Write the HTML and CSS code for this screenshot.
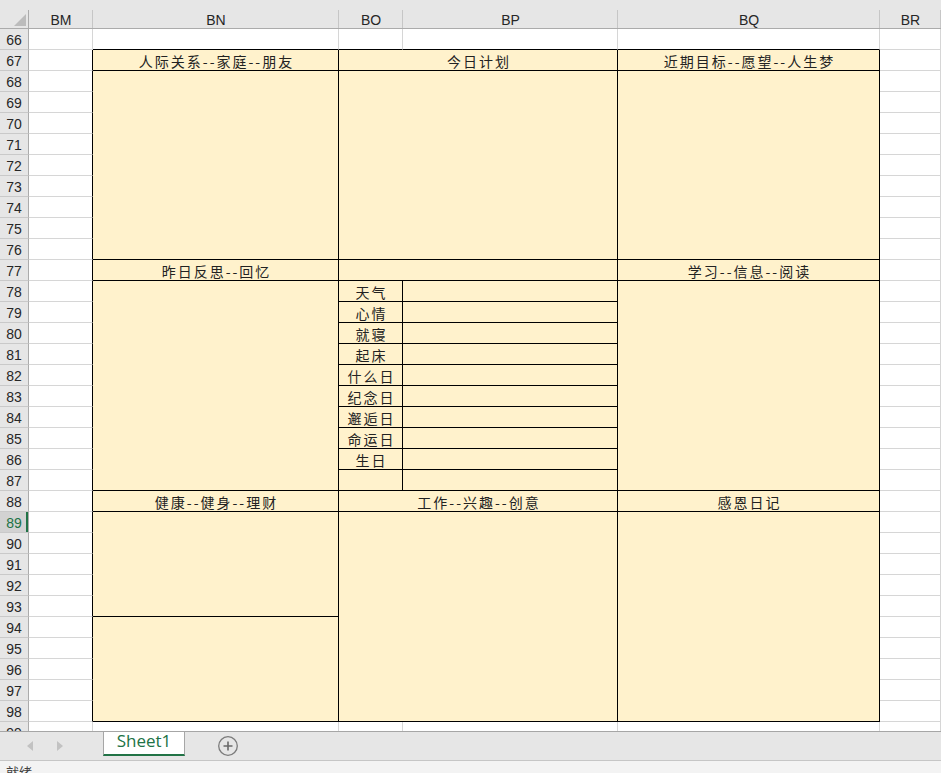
FILE: index.html
```html
<!DOCTYPE html>
<html lang="zh-CN">
<head>
<meta charset="utf-8">
<title>Sheet1</title>
<link rel="stylesheet" href="styles.css">
</head>
<body>
<div class="app">
  <div class="sheet">
    <div class="corner"><svg class="corner-mark" width="28" height="28" viewBox="0 0 28 28"><polygon points="26,14 26,26 14,26" fill="#bcbcbc"/></svg></div>
    <div class="ch">BM</div><div class="ch">BN</div><div class="ch">BO</div><div class="ch">BP</div><div class="ch">BQ</div><div class="ch">BR</div>

    <div class="rh">66</div><div class="c"></div><div class="c bb"></div><div class="c bb"></div><div class="c bb"></div><div class="c bb"></div><div class="c"></div>

    <div class="rh">67</div><div class="c br"></div><div class="x t">人际关系--家庭--朋友</div><div class="x t cs2">今日计划</div><div class="x t">近期目标--愿望--人生梦</div><div class="c"></div>

    <div class="rh">68</div><div class="c br"></div><div class="x rs9"></div><div class="x cs2 rs9"></div><div class="x rs9"></div><div class="c"></div>
    <div class="rh">69</div><div class="c br"></div><div class="c"></div>
    <div class="rh">70</div><div class="c br"></div><div class="c"></div>
    <div class="rh">71</div><div class="c br"></div><div class="c"></div>
    <div class="rh">72</div><div class="c br"></div><div class="c"></div>
    <div class="rh">73</div><div class="c br"></div><div class="c"></div>
    <div class="rh">74</div><div class="c br"></div><div class="c"></div>
    <div class="rh">75</div><div class="c br"></div><div class="c"></div>
    <div class="rh">76</div><div class="c br"></div><div class="c"></div>

    <div class="rh">77</div><div class="c br"></div><div class="x t">昨日反思--回忆</div><div class="x cs2"></div><div class="x t">学习--信息--阅读</div><div class="c"></div>

    <div class="rh">78</div><div class="c br"></div><div class="x rs10"></div><div class="x t">天气</div><div class="x"></div><div class="x rs10"></div><div class="c"></div>
    <div class="rh">79</div><div class="c br"></div><div class="x t">心情</div><div class="x"></div><div class="c"></div>
    <div class="rh">80</div><div class="c br"></div><div class="x t">就寝</div><div class="x"></div><div class="c"></div>
    <div class="rh">81</div><div class="c br"></div><div class="x t">起床</div><div class="x"></div><div class="c"></div>
    <div class="rh">82</div><div class="c br"></div><div class="x t">什么日</div><div class="x"></div><div class="c"></div>
    <div class="rh">83</div><div class="c br"></div><div class="x t">纪念日</div><div class="x"></div><div class="c"></div>
    <div class="rh">84</div><div class="c br"></div><div class="x t">邂逅日</div><div class="x"></div><div class="c"></div>
    <div class="rh">85</div><div class="c br"></div><div class="x t">命运日</div><div class="x"></div><div class="c"></div>
    <div class="rh">86</div><div class="c br"></div><div class="x t">生日</div><div class="x"></div><div class="c"></div>
    <div class="rh">87</div><div class="c br"></div><div class="x t"></div><div class="x"></div><div class="c"></div>

    <div class="rh">88</div><div class="c br"></div><div class="x t">健康--健身--理财</div><div class="x t cs2">工作--兴趣--创意</div><div class="x t">感恩日记</div><div class="c"></div>

    <div class="rh on">89</div><div class="c br"></div><div class="x rs5"></div><div class="x cs2 rs10"></div><div class="x rs10"></div><div class="c"></div>
    <div class="rh">90</div><div class="c br"></div><div class="c"></div>
    <div class="rh">91</div><div class="c br"></div><div class="c"></div>
    <div class="rh">92</div><div class="c br"></div><div class="c"></div>
    <div class="rh">93</div><div class="c br"></div><div class="c"></div>
    <div class="rh">94</div><div class="c br"></div><div class="x rs5"></div><div class="c"></div>
    <div class="rh">95</div><div class="c br"></div><div class="c"></div>
    <div class="rh">96</div><div class="c br"></div><div class="c"></div>
    <div class="rh">97</div><div class="c br"></div><div class="c"></div>
    <div class="rh">98</div><div class="c br"></div><div class="c"></div>

    <div class="rh">99</div><div class="c"></div><div class="c"></div><div class="c"></div><div class="c"></div><div class="c"></div><div class="c"></div>
  </div>

  <div class="tabbar">
    <div class="nav">
      <svg width="6" height="10" viewBox="0 0 6 10"><polygon points="6,0 6,10 0,5" fill="#c2c2c2"/></svg>
      <svg width="6" height="10" viewBox="0 0 6 10"><polygon points="0,0 0,10 6,5" fill="#c2c2c2"/></svg>
    </div>
    <div class="tab">Sheet1</div>
    <div class="add">
      <svg width="22" height="22" viewBox="0 0 22 22"><circle cx="11" cy="11" r="9.3" fill="none" stroke="#7b7b7b" stroke-width="1.3"/><path d="M11 6.5v9M6.5 11h9" stroke="#6a6a6a" stroke-width="1.6"/></svg>
    </div>
  </div>

  <div class="status">就绪</div>
</div>
</body>
</html>
```

FILE: styles.css
```css
html, body {
  margin: 0;
  padding: 0;
  overflow: hidden;
  background: #ffffff;
}

.app {
  display: flex;
  flex-direction: column;
  height: 773px;
  font-family: "Liberation Sans", Arial, sans-serif;
}

.sheet {
  flex: 0 0 731px;
  height: 731px;
  overflow: hidden;
  display: grid;
  grid-template-columns: 29px 64px 246px 64px 215px 262px 1fr;
  grid-template-rows: 29px repeat(34, 21px);
}

.sheet > div {
  box-sizing: border-box;
  min-width: 0;
}

/* header row */
.corner {
  background: #e6e6e6 linear-gradient(#ababab, #ababab) no-repeat right bottom / 1px 18px;
  border-bottom: 1px solid #ababab;
}

.corner-mark {
  display: block;
}

.ch {
  background: #e6e6e6 linear-gradient(#c6c6c6, #c6c6c6) no-repeat right bottom / 1px 18px;
  border-bottom: 1px solid #ababab;
  color: #262626;
  font-size: 14px;
  line-height: 18px;
  padding-top: 11px;
  text-align: center;
}

/* row header */
.rh {
  background: #e6e6e6;
  border-right: 1px solid #ababab;
  border-bottom: 1px solid #c9c9c9;
  color: #262626;
  font-size: 14px;
  line-height: 20px;
  padding-top: 1px;
  text-align: center;
  overflow: hidden;
}

.rh.on {
  background: #d2d2d2;
  color: #217346;
  box-shadow: inset -2px 0 0 #217346;
}

/* plain cells with gridlines */
.c {
  background: #fff;
  border-right: 1px solid #d6d6d6;
  border-bottom: 1px solid #d6d6d6;
}

.c.bb {
  border-bottom-color: #000;
}

.c.br {
  border-right-color: #000;
}

/* bordered, filled block */
.x {
  background: #fff2cc;
  border-right: 1px solid #000;
  border-bottom: 1px solid #000;
}

.t {
  font-family: "Noto Sans CJK SC", "Noto Sans", sans-serif;
  font-size: 14px;
  font-weight: 400;
  letter-spacing: 2px;
  padding-left: 2px;
  line-height: 22px;
  color: #222;
  text-align: center;
  white-space: nowrap;
  overflow: hidden;
}

.cs2 { grid-column: span 2; }
.rs5 { grid-row: span 5; }
.rs9 { grid-row: span 9; }
.rs10 { grid-row: span 10; }

/* sheet tabs */
.tabbar {
  flex: 0 0 29px;
  box-sizing: border-box;
  border-top: 1px solid #a6a6a6;
  background: #e6e6e6;
  display: flex;
  align-items: flex-start;
}

.nav {
  width: 103px;
  box-sizing: border-box;
  padding: 9px 0 0 27px;
  display: flex;
  gap: 24px;
}

.nav svg {
  display: block;
}

.tab {
  width: 82px;
  height: 24px;
  box-sizing: border-box;
  background: #fff;
  border-left: 1px solid #a6a6a6;
  border-right: 1px solid #a6a6a6;
  border-bottom: 2px solid #217346;
  color: #217346;
  font-family: "Open Sans", "Liberation Sans", sans-serif;
  font-size: 17px;
  line-height: 18px;
  text-align: center;
}

.add {
  margin: 3px 0 0 32px;
}

.add svg {
  display: block;
}

/* status bar */
.status {
  flex: 1 0 auto;
  border-top: 1px solid #c6c6c6;
  background: #f3f3f3;
  padding: 2px 0 0 6px;
  font-family: "Noto Sans CJK SC", sans-serif;
  font-size: 13px;
  line-height: 18px;
  color: #404040;
  overflow: hidden;
}
```
